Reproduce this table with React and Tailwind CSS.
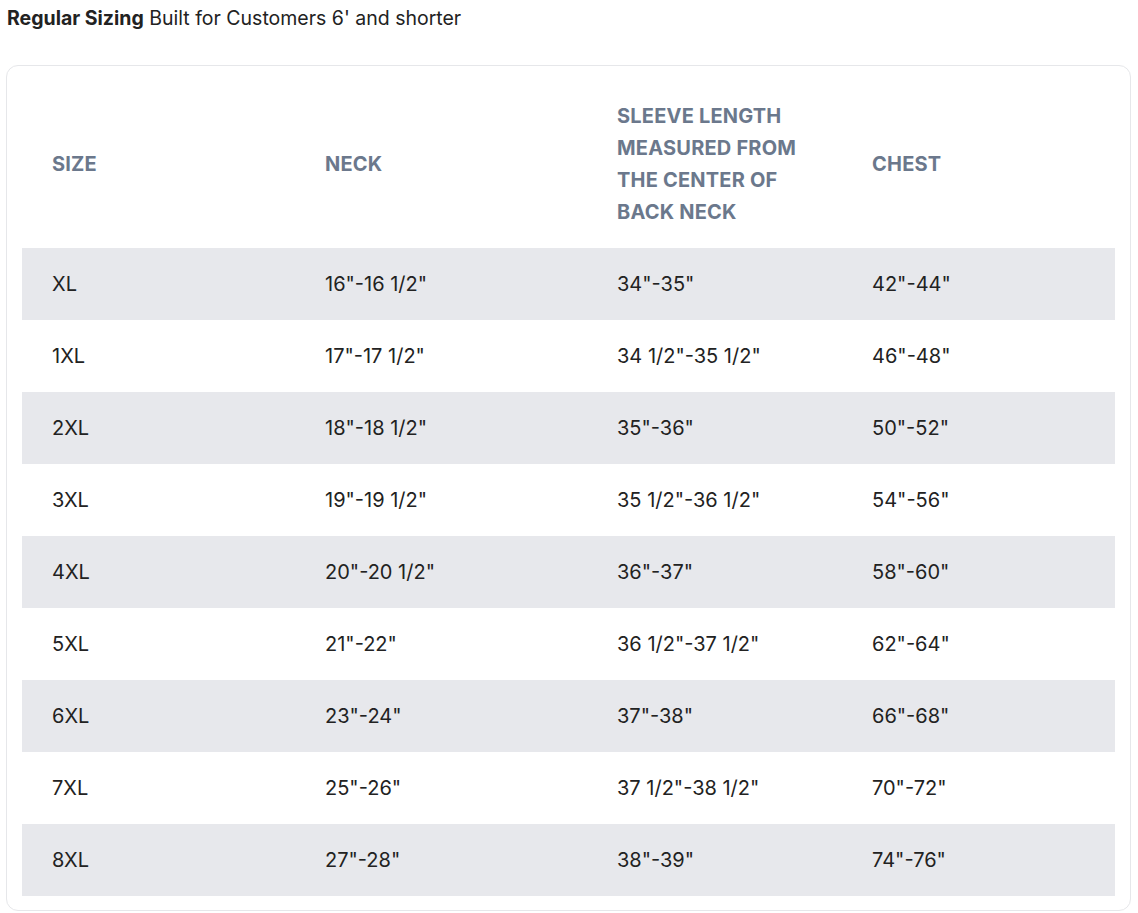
import React from 'react';

const rows = [
  ['XL', '16"-16 1/2"', '34"-35"', '42"-44"'],
  ['1XL', '17"-17 1/2"', '34 1/2"-35 1/2"', '46"-48"'],
  ['2XL', '18"-18 1/2"', '35"-36"', '50"-52"'],
  ['3XL', '19"-19 1/2"', '35 1/2"-36 1/2"', '54"-56"'],
  ['4XL', '20"-20 1/2"', '36"-37"', '58"-60"'],
  ['5XL', '21"-22"', '36 1/2"-37 1/2"', '62"-64"'],
  ['6XL', '23"-24"', '37"-38"', '66"-68"'],
  ['7XL', '25"-26"', '37 1/2"-38 1/2"', '70"-72"'],
  ['8XL', '27"-28"', '38"-39"', '74"-76"'],
];

export default function App() {
  return (
    <div className="min-h-screen bg-white font-['Inter',sans-serif] text-[#222]">
      <p className="px-[7px] pt-[5px] text-[19.5px] leading-[26px] text-[#222]">
        <span className="font-bold">Regular Sizing</span> Built for Customers 6' and shorter
      </p>

      <div className="mx-[6px] mt-[34px] w-[1125px] rounded-[12px] border border-[#e6e7ea] px-[15px] pt-[14px] pb-[14px]">
        <table className="w-full table-fixed border-collapse text-left">
          <colgroup>
            <col className="w-[273px]" />
            <col className="w-[292px]" />
            <col className="w-[255px]" />
            <col />
          </colgroup>
          <thead>
            <tr className="text-[20px] font-bold uppercase leading-[32px] tracking-[0.01em] text-[#6b788c]">
              <th className="h-[168px] pl-[30px] align-middle">Size</th>
              <th className="pl-[30px] align-middle">Neck</th>
              <th className="pl-[30px] align-middle">
                <div className="w-[200px]">Sleeve Length Measured From The Center of Back Neck</div>
              </th>
              <th className="pl-[30px] align-middle">Chest</th>
            </tr>
          </thead>
          <tbody>
            {rows.map((row, i) => (
              <tr key={row[0]} className={`h-[72px] text-[20px] ${i % 2 === 0 ? 'bg-[#e7e8ec]' : 'bg-white'}`}>
                {row.map((cell, j) => (
                  <td key={j} className="pl-[30px] align-middle">{cell}</td>
                ))}
              </tr>
            ))}
          </tbody>
        </table>
      </div>
    </div>
  );
}
